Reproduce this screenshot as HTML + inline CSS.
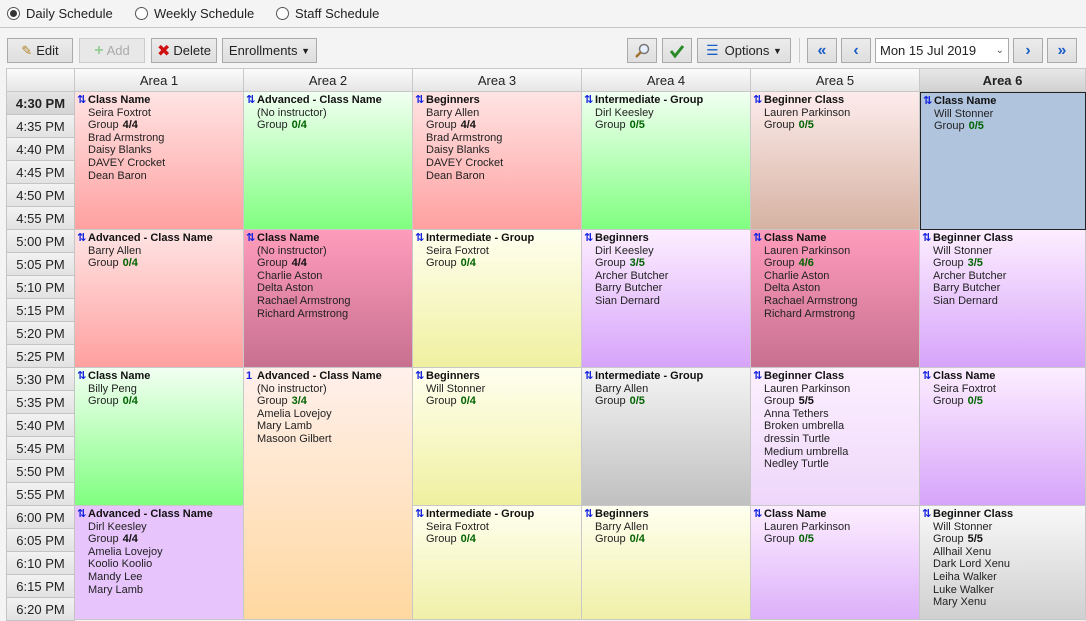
<!DOCTYPE html>
<html><head><meta charset="utf-8"><style>
*{box-sizing:border-box;margin:0;padding:0}
body{width:1086px;height:620px;overflow:hidden;background:#f4f4f4;font-family:"Liberation Sans","DejaVu Sans",sans-serif;font-size:11px;color:#222;position:relative}
.a{position:absolute}
.radio{top:5px;font-size:13px;display:flex;align-items:center;height:17px}
.radio i{display:inline-block;width:13px;height:13px;border:1px solid #555;border-radius:50%;background:#fff;margin-right:6px;position:relative}
.radio i.on:after{content:"";position:absolute;left:2px;top:2px;width:7px;height:7px;border-radius:50%;background:#333}
.btn{top:38px;height:25px;background:linear-gradient(#ececec,#dedede);border:1px solid #aaa;font-size:13px;display:flex;align-items:center;justify-content:center;color:#222}
.hd{top:69px;height:23px;background:linear-gradient(#fbfbfb,#e6e6e6);border-right:1px solid #c8c8c8;border-bottom:1px solid #c8c8c8;text-align:center;font-size:13px;line-height:23px}
.tm{left:6px;width:69px;height:23px;background:linear-gradient(#f2f2f2,#e2e2e2);border:1px solid #c4c4c4;border-top:none;text-align:center;font-size:13px;line-height:23px;color:#222}
.blk{border-right:1px solid #c8c8c8;border-bottom:1px solid #c8c8c8;padding:2px 0 0 13px;line-height:12.6px;overflow:hidden}
.blk b{font-weight:bold;color:#111}
.blk .ic{position:absolute;left:2px;top:2px;color:#1020e0;font-weight:bold;font-size:11px}
.g{color:#006400;font-weight:bold;margin-left:4px}
.k{color:#111;font-weight:bold;margin-left:4px}
</style></head><body>
<div class="a radio" style="left:7px"><i class="on"></i>Daily Schedule</div>
<div class="a radio" style="left:135px"><i></i>Weekly Schedule</div>
<div class="a radio" style="left:276px"><i></i>Staff Schedule</div>
<div class="a" style="left:0;top:27px;width:1086px;height:1px;background:#c8c8c8"></div>

<div class="a btn" style="left:7px;width:66px"><span style="color:#b08020;margin-right:4px">&#9998;</span>Edit</div>
<div class="a btn" style="left:79px;width:66px;color:#aaa;background:#e8e8e8;border-color:#ccc"><span style="color:#9c9;font-weight:bold;font-size:16px;margin-right:3px">+</span>Add</div>
<div class="a btn" style="left:151px;width:66px"><span style="color:#d01010;font-weight:bold;font-size:16px;margin-right:3px">✖</span>Delete</div>
<div class="a btn" style="left:222px;width:95px">Enrollments&nbsp;<span style="font-size:9px">▼</span></div>
<div class="a btn" style="left:627px;width:30px"><svg width="16" height="16"><circle cx="10" cy="6" r="4.5" fill="#e8f0ff" stroke="#777" stroke-width="1.5"/><line x1="7" y1="9" x2="2" y2="14" stroke="#a07030" stroke-width="2.5"/></svg></div>
<div class="a btn" style="left:662px;width:30px"><svg width="16" height="16"><path d="M2 8 L6 13 L14 3" fill="none" stroke="#2a8a2a" stroke-width="3"/></svg></div>
<div class="a btn" style="left:697px;width:94px"><span style="color:#1a5ec8;font-size:14px;margin-right:6px">☰</span>Options&nbsp;<span style="font-size:9px">▼</span></div>
<div class="a" style="left:799px;top:38px;width:1px;height:25px;background:#ccc"></div>
<div class="a btn" style="left:807px;width:30px;color:#1a5ec8;font-weight:bold;font-size:16px">«</div>
<div class="a btn" style="left:841px;width:30px;color:#1a5ec8;font-weight:bold;font-size:16px">‹</div>
<div class="a btn" style="left:875px;width:134px;background:#fff;justify-content:space-between;padding:0 4px">Mon 15 Jul 2019<span style="font-size:10px;color:#555">⌄</span></div>
<div class="a btn" style="left:1013px;width:30px;color:#1a5ec8;font-weight:bold;font-size:16px">›</div>
<div class="a btn" style="left:1047px;width:30px;color:#1a5ec8;font-weight:bold;font-size:16px">»</div>

<div class="a" style="left:6px;top:68px;width:1080px;height:1px;background:#c8c8c8"></div>
<div class="a hd" style="left:6px;width:69px;border-left:1px solid #c8c8c8"></div>
<div class="a hd" style="left:75px;width:169px">Area 1</div>
<div class="a hd" style="left:244px;width:169px">Area 2</div>
<div class="a hd" style="left:413px;width:169px">Area 3</div>
<div class="a hd" style="left:582px;width:169px">Area 4</div>
<div class="a hd" style="left:751px;width:169px">Area 5</div>
<div class="a hd" style="left:920px;width:166px;font-weight:bold;background:linear-gradient(#e8e8e8,#d2d2d2)">Area 6</div>

<div class="a tm" style="top:92px;font-weight:bold;background:linear-gradient(#e4e4e4,#d4d4d4)">4:30 PM</div>
<div class="a tm" style="top:115px">4:35 PM</div>
<div class="a tm" style="top:138px">4:40 PM</div>
<div class="a tm" style="top:161px">4:45 PM</div>
<div class="a tm" style="top:184px">4:50 PM</div>
<div class="a tm" style="top:207px">4:55 PM</div>
<div class="a tm" style="top:230px">5:00 PM</div>
<div class="a tm" style="top:253px">5:05 PM</div>
<div class="a tm" style="top:276px">5:10 PM</div>
<div class="a tm" style="top:299px">5:15 PM</div>
<div class="a tm" style="top:322px">5:20 PM</div>
<div class="a tm" style="top:345px">5:25 PM</div>
<div class="a tm" style="top:368px">5:30 PM</div>
<div class="a tm" style="top:391px">5:35 PM</div>
<div class="a tm" style="top:414px">5:40 PM</div>
<div class="a tm" style="top:437px">5:45 PM</div>
<div class="a tm" style="top:460px">5:50 PM</div>
<div class="a tm" style="top:483px">5:55 PM</div>
<div class="a tm" style="top:506px">6:00 PM</div>
<div class="a tm" style="top:529px">6:05 PM</div>
<div class="a tm" style="top:552px">6:10 PM</div>
<div class="a tm" style="top:575px">6:15 PM</div>
<div class="a tm" style="top:598px">6:20 PM</div>

<!-- row 1 -->
<div class="a blk" style="left:75px;top:92px;width:169px;height:138px;background:linear-gradient(#ffe4e4,#ffa0a0)"><span class="ic">⇅</span><b>Class Name</b><br>Seira Foxtrot<br>Group<span class="k">4/4</span><br>Brad Armstrong<br>Daisy Blanks<br>DAVEY Crocket<br>Dean Baron</div>
<div class="a blk" style="left:244px;top:92px;width:169px;height:138px;background:linear-gradient(#f2fff2,#80ff80)"><span class="ic">⇅</span><b>Advanced - Class Name</b><br>(No instructor)<br>Group<span class="g">0/4</span></div>
<div class="a blk" style="left:413px;top:92px;width:169px;height:138px;background:linear-gradient(#ffe4e4,#ffa0a0)"><span class="ic">⇅</span><b>Beginners</b><br>Barry Allen<br>Group<span class="k">4/4</span><br>Brad Armstrong<br>Daisy Blanks<br>DAVEY Crocket<br>Dean Baron</div>
<div class="a blk" style="left:582px;top:92px;width:169px;height:138px;background:linear-gradient(#f2fff2,#80ff80)"><span class="ic">⇅</span><b>Intermediate - Group</b><br>Dirl Keesley<br>Group<span class="g">0/5</span></div>
<div class="a blk" style="left:751px;top:92px;width:169px;height:138px;background:linear-gradient(#fdecec,#d6b2a2)"><span class="ic">⇅</span><b>Beginner Class</b><br>Lauren Parkinson<br>Group<span class="g">0/5</span></div>
<div class="a blk" style="left:920px;top:92px;width:166px;height:138px;background:#b0c4de;border:1px solid #222"><span class="ic">⇅</span><b>Class Name</b><br>Will Stonner<br>Group<span class="g">0/5</span></div>
<!-- row 2 -->
<div class="a blk" style="left:75px;top:230px;width:169px;height:138px;background:linear-gradient(#ffe4e4,#ffa0a0)"><span class="ic">⇅</span><b>Advanced - Class Name</b><br>Barry Allen<br>Group<span class="g">0/4</span></div>
<div class="a blk" style="left:244px;top:230px;width:169px;height:138px;background:linear-gradient(#ff9cbc,#c87090)"><span class="ic">⇅</span><b>Class Name</b><br>(No instructor)<br>Group<span class="k">4/4</span><br>Charlie Aston<br>Delta Aston<br>Rachael Armstrong<br>Richard Armstrong</div>
<div class="a blk" style="left:413px;top:230px;width:169px;height:138px;background:linear-gradient(#fffff0,#f0f0a0)"><span class="ic">⇅</span><b>Intermediate - Group</b><br>Seira Foxtrot<br>Group<span class="g">0/4</span></div>
<div class="a blk" style="left:582px;top:230px;width:169px;height:138px;background:linear-gradient(#fdeeff,#d6a4fa)"><span class="ic">⇅</span><b>Beginners</b><br>Dirl Keesley<br>Group<span class="g">3/5</span><br>Archer Butcher<br>Barry Butcher<br>Sian Dernard</div>
<div class="a blk" style="left:751px;top:230px;width:169px;height:138px;background:linear-gradient(#ff9cbc,#c87090)"><span class="ic">⇅</span><b>Class Name</b><br>Lauren Parkinson<br>Group<span class="g">4/6</span><br>Charlie Aston<br>Delta Aston<br>Rachael Armstrong<br>Richard Armstrong</div>
<div class="a blk" style="left:920px;top:230px;width:166px;height:138px;background:linear-gradient(#fdeeff,#d6a4fa)"><span class="ic">⇅</span><b>Beginner Class</b><br>Will Stonner<br>Group<span class="g">3/5</span><br>Archer Butcher<br>Barry Butcher<br>Sian Dernard</div>
<!-- row 3 -->
<div class="a blk" style="left:75px;top:368px;width:169px;height:138px;background:linear-gradient(#f2fff2,#80ff80)"><span class="ic">⇅</span><b>Class Name</b><br>Billy Peng<br>Group<span class="g">0/4</span></div>
<div class="a blk" style="left:244px;top:368px;width:169px;height:252px;background:linear-gradient(#fff0ec,#ffd8a0)"><span class="ic">1</span><b>Advanced - Class Name</b><br>(No instructor)<br>Group<span class="g">3/4</span><br>Amelia Lovejoy<br>Mary Lamb<br>Masoon Gilbert</div>
<div class="a blk" style="left:413px;top:368px;width:169px;height:138px;background:linear-gradient(#fffff0,#f0f0a0)"><span class="ic">⇅</span><b>Beginners</b><br>Will Stonner<br>Group<span class="g">0/4</span></div>
<div class="a blk" style="left:582px;top:368px;width:169px;height:138px;background:linear-gradient(#f4f4f4,#c0c0c0)"><span class="ic">⇅</span><b>Intermediate - Group</b><br>Barry Allen<br>Group<span class="g">0/5</span></div>
<div class="a blk" style="left:751px;top:368px;width:169px;height:138px;background:linear-gradient(#fdf0ff,#eed6fa)"><span class="ic">⇅</span><b>Beginner Class</b><br>Lauren Parkinson<br>Group<span class="k">5/5</span><br>Anna Tethers<br>Broken umbrella<br>dressin Turtle<br>Medium umbrella<br>Nedley Turtle</div>
<div class="a blk" style="left:920px;top:368px;width:166px;height:138px;background:linear-gradient(#fdeeff,#d6a4fa)"><span class="ic">⇅</span><b>Class Name</b><br>Seira Foxtrot<br>Group<span class="g">0/5</span></div>
<!-- row 4 -->
<div class="a blk" style="left:75px;top:506px;width:169px;height:114px;background:#e8c4fc"><span class="ic">⇅</span><b>Advanced - Class Name</b><br>Dirl Keesley<br>Group<span class="k">4/4</span><br>Amelia Lovejoy<br>Koolio Koolio<br>Mandy Lee<br>Mary Lamb</div>
<div class="a blk" style="left:413px;top:506px;width:169px;height:114px;background:linear-gradient(#fffff0,#f0f0a8)"><span class="ic">⇅</span><b>Intermediate - Group</b><br>Seira Foxtrot<br>Group<span class="g">0/4</span></div>
<div class="a blk" style="left:582px;top:506px;width:169px;height:114px;background:linear-gradient(#fffff0,#f0f0a8)"><span class="ic">⇅</span><b>Beginners</b><br>Barry Allen<br>Group<span class="g">0/4</span></div>
<div class="a blk" style="left:751px;top:506px;width:169px;height:114px;background:linear-gradient(#fdeeff,#dcb0fa)"><span class="ic">⇅</span><b>Class Name</b><br>Lauren Parkinson<br>Group<span class="g">0/5</span></div>
<div class="a blk" style="left:920px;top:506px;width:166px;height:114px;background:linear-gradient(#f8f8f8,#d0d0d0)"><span class="ic">⇅</span><b>Beginner Class</b><br>Will Stonner<br>Group<span class="k">5/5</span><br>Allhail Xenu<br>Dark Lord Xenu<br>Leiha Walker<br>Luke Walker<br>Mary Xenu</div>
</body></html>
